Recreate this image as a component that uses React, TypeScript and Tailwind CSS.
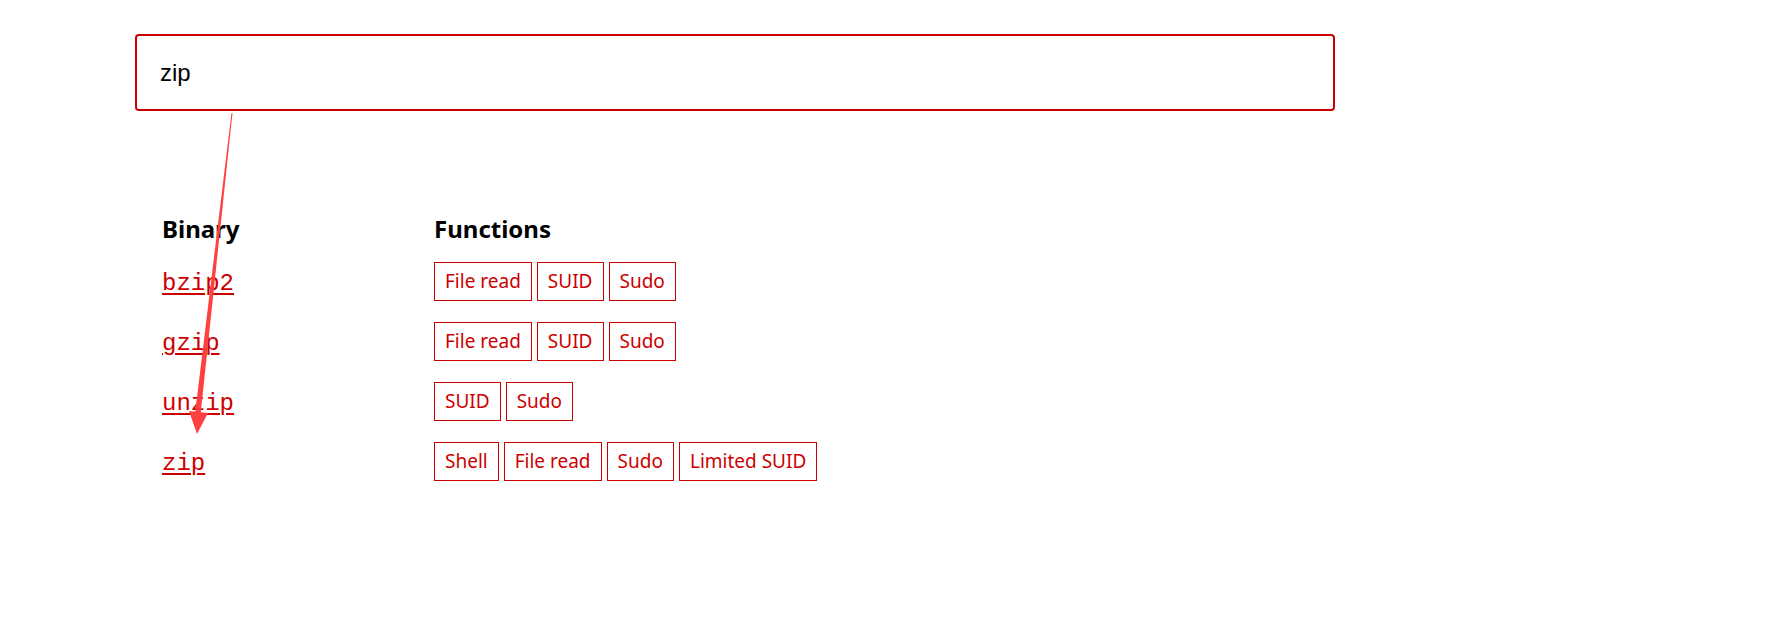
import React from "react";

const rows: { name: string; tags: string[] }[] = [
  { name: "bzip2", tags: ["File read", "SUID", "Sudo"] },
  { name: "gzip", tags: ["File read", "SUID", "Sudo"] },
  { name: "unzip", tags: ["SUID", "Sudo"] },
  { name: "zip", tags: ["Shell", "File read", "Sudo", "Limited SUID"] },
];

export default function App() {
  return (
    <div className="relative min-h-[643px] w-full bg-white font-['Noto_Sans',sans-serif]">
      <div className="pl-[135px] pt-[34px]">
        <div className="flex h-[77px] w-[1200px] items-center rounded-[4px] border-2 border-[#cc0000] pl-[23px] font-['Liberation_Sans',Arial,sans-serif] text-[24px] text-black">
          zip
        </div>
        <div className="mt-[96px] pl-[27px]">
          <div className="grid grid-cols-[272px_1fr]">
            <div className="flex h-[44px] items-center text-[24px] font-bold text-black">Binary</div>
            <div className="flex h-[44px] items-center text-[24px] font-bold text-black">Functions</div>
            {rows.map((r) => (
              <React.Fragment key={r.name}>
                <div className="flex h-[60px] items-center pt-[6px]">
                  <a
                    href="#"
                    className="font-['Liberation_Mono',monospace] text-[24px] text-[#cc0000] underline decoration-[2px] underline-offset-[3px]"
                  >
                    {r.name}
                  </a>
                </div>
                <div className="flex h-[60px] items-center gap-[5px]">
                  {r.tags.map((t) => (
                    <span
                      key={t}
                      className="flex h-[39px] items-center border border-[#cc0000] px-[10px] text-[19px] text-[#cc0000]"
                    >
                      {t}
                    </span>
                  ))}
                </div>
              </React.Fragment>
            ))}
          </div>
        </div>
      </div>
      <svg
        className="pointer-events-none absolute left-0 top-0"
        width="1775"
        height="643"
        viewBox="0 0 1775 643"
      >
        <polygon points="231.5,113 232.5,113 200.5,415 195,414" fill="#ff4040" />
        <polygon points="189,411 208,413 197,434" fill="#ff4040" />
      </svg>
    </div>
  );
}
